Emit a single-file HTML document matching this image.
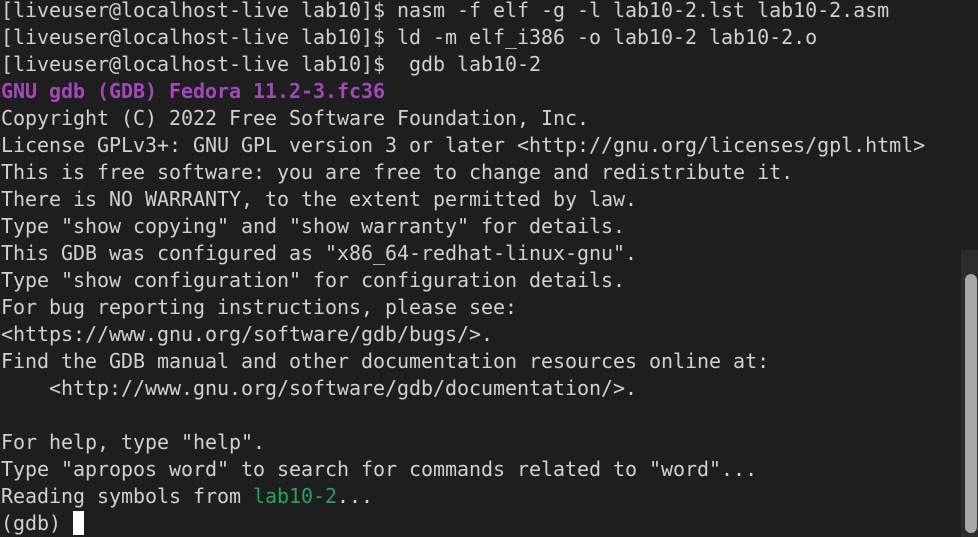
<!DOCTYPE html>
<html><head><meta charset="utf-8"><style>
html,body{margin:0;padding:0;background:#1e1e1e;width:978px;height:537px;overflow:hidden}
pre{margin:0;position:absolute;left:1px;top:-3px;font-family:"DejaVu Sans Mono","Liberation Mono",monospace;font-size:20px;line-height:27px;color:#d0d0d0;letter-spacing:-0.04px}
.p{color:#a347ba;font-weight:bold}.g{color:#26a269}
.cur{display:inline-block;width:11px;height:24px;background:#fff;vertical-align:-5px}
.track{position:absolute;left:961px;top:250px;width:17px;height:287px;background:#2c2c2c}
.thumb{position:absolute;left:965px;top:274px;width:12px;height:259px;background:#a8a8a8;border-radius:6px}
</style></head><body>
<pre>[liveuser@localhost-live lab10]$ nasm -f elf -g -l lab10-2.lst lab10-2.asm
[liveuser@localhost-live lab10]$ ld -m elf_i386 -o lab10-2 lab10-2.o
[liveuser@localhost-live lab10]$  gdb lab10-2
<span class="p">GNU gdb (GDB) Fedora 11.2-3.fc36</span>
Copyright (C) 2022 Free Software Foundation, Inc.
License GPLv3+: GNU GPL version 3 or later &lt;http://gnu.org/licenses/gpl.html&gt;
This is free software: you are free to change and redistribute it.
There is NO WARRANTY, to the extent permitted by law.
Type "show copying" and "show warranty" for details.
This GDB was configured as "x86_64-redhat-linux-gnu".
Type "show configuration" for configuration details.
For bug reporting instructions, please see:
&lt;https://www.gnu.org/software/gdb/bugs/&gt;.
Find the GDB manual and other documentation resources online at:
    &lt;http://www.gnu.org/software/gdb/documentation/&gt;.

For help, type "help".
Type "apropos word" to search for commands related to "word"...
Reading symbols from <span class="g">lab10-2</span>...
(gdb) <span class="cur"></span></pre>
<div class="track"></div><div class="thumb"></div>
</body></html>
